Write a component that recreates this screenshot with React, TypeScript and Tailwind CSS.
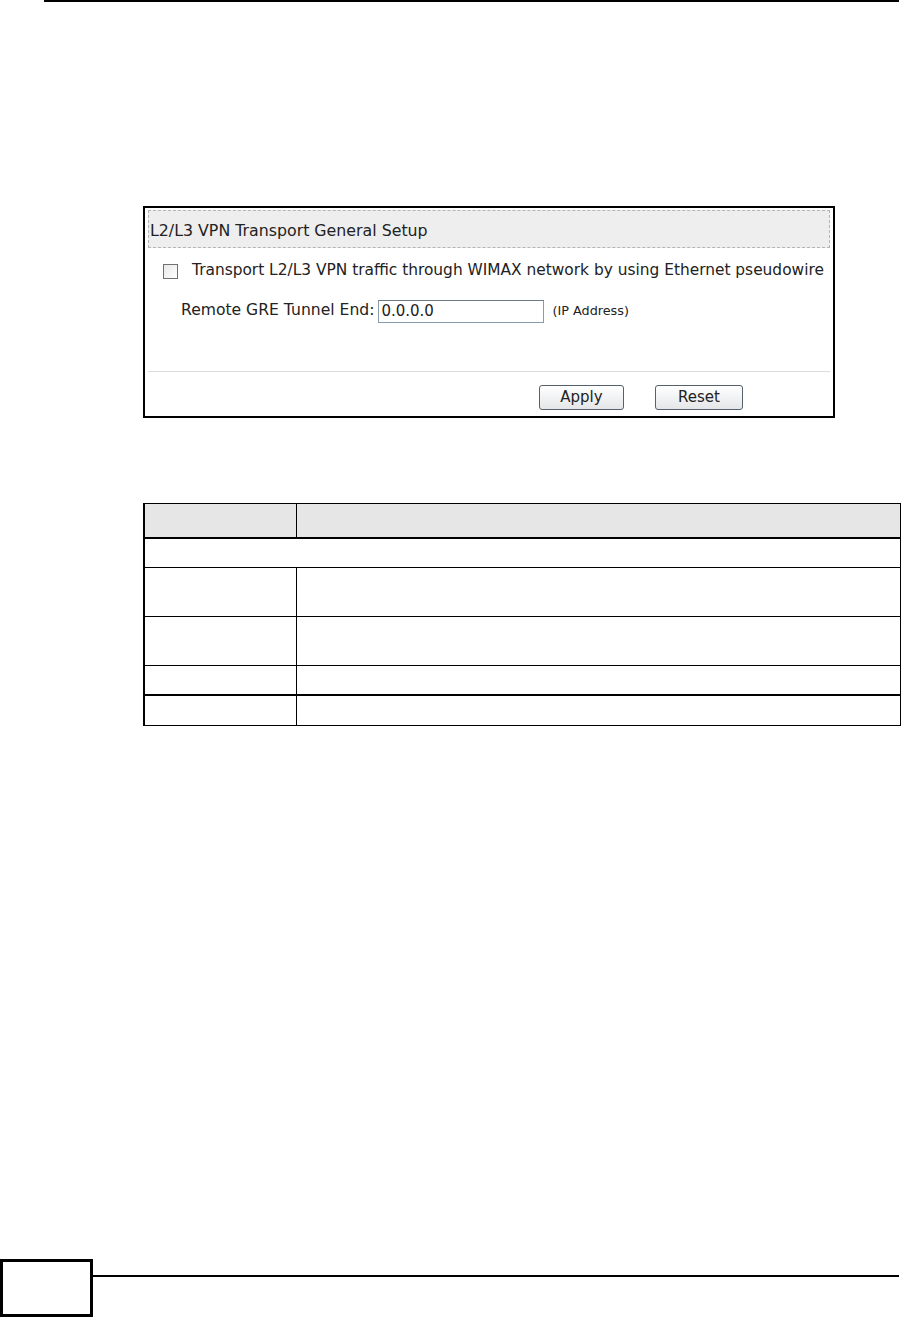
import React from "react";

const rows = [
  { h: "h-[29px]", thick: false },
  { h: "h-[49px]", thick: false },
  { h: "h-[49px]", thick: false },
  { h: "h-[30px]", thick: false },
  { h: "h-[29px]", thick: true },
];

function SetupPanel() {
  return (
    <div className="ml-[143px] mt-[204px] w-[692px] h-[212px] border-2 border-black bg-white flex flex-col font-['DejaVu_Sans',sans-serif] text-[#222]">
      <div className="mx-[3px] mt-[2px] h-[38px] bg-[#eeeeee] border border-dashed border-[#b4b4b4] flex items-center pl-[1px] pt-[4px] text-[15.8px]">
        L2/L3 VPN Transport General Setup
      </div>

      <div className="flex items-center mt-[14px] ml-[18px] h-[18px]">
        <div className="w-[15px] h-[15px] border border-[#707070] bg-gradient-to-br from-[#e8e8e8] to-white" />
        <span className="ml-[14px] text-[15.4px]">
          Transport L2/L3 VPN traffic through WIMAX network by using Ethernet pseudowire
        </span>
      </div>

      <div className="flex items-center mt-[19px] ml-[36px] h-[24px]">
        <span className="text-[15.6px]">Remote GRE Tunnel End:</span>
        <div className="ml-[4px] w-[166px] h-[23px] border border-[#8a9aa8] border-t-[#6a7a88] flex items-center pl-[2px] text-[15px]">
          0.0.0.0
        </div>
        <span className="ml-[8px] text-[12.8px]">(IP Address)</span>
      </div>

      <div className="mt-[48px] mx-[3px] h-px bg-[#dcdcdc]" />

      <div className="flex mt-[13px] ml-[394px] gap-[31px]">
        <button className="w-[85px] h-[25px] rounded-[3px] border border-[#55626e] bg-gradient-to-b from-white to-[#e4e6e8] text-[15px] leading-none text-[#222]">
          Apply
        </button>
        <button className="w-[88px] h-[25px] rounded-[3px] border border-[#55626e] bg-gradient-to-b from-white to-[#e4e6e8] text-[15px] leading-none text-[#222]">
          Reset
        </button>
      </div>
    </div>
  );
}

function DescTable() {
  return (
    <div className="ml-[143px] mt-[85px] w-[758px] border-l-2 border-r border-b border-black">
      <div className="flex h-[36px] bg-[#e6e6e6] border-t border-b-2 border-black">
        <div className="w-[152px] border-r border-black" />
        <div className="flex-1" />
      </div>
      <div className="h-[29px] border-b border-black" />
      {rows.slice(1).map((r, i) => (
        <div
          key={i}
          className={`flex ${r.h} border-black ${i === rows.length - 3 ? "border-b-2" : i === rows.length - 2 ? "" : "border-b"}`}
        >
          <div className="w-[152px] border-r border-black" />
          <div className="flex-1" />
        </div>
      ))}
    </div>
  );
}

export default function App() {
  return (
    <div className="relative w-[901px] h-[1317px] bg-white flex flex-col overflow-hidden">
      <div className="ml-[44px] mr-[2px] h-[2px] bg-black" />
      <SetupPanel />
      <DescTable />
      <div className="mt-auto flex items-start">
        <div className="w-[93px] h-[58px] border-[3px] border-black" />
        <div className="mt-[16px] flex-1 mr-[2px] h-[2px] bg-black" />
      </div>
    </div>
  );
}
